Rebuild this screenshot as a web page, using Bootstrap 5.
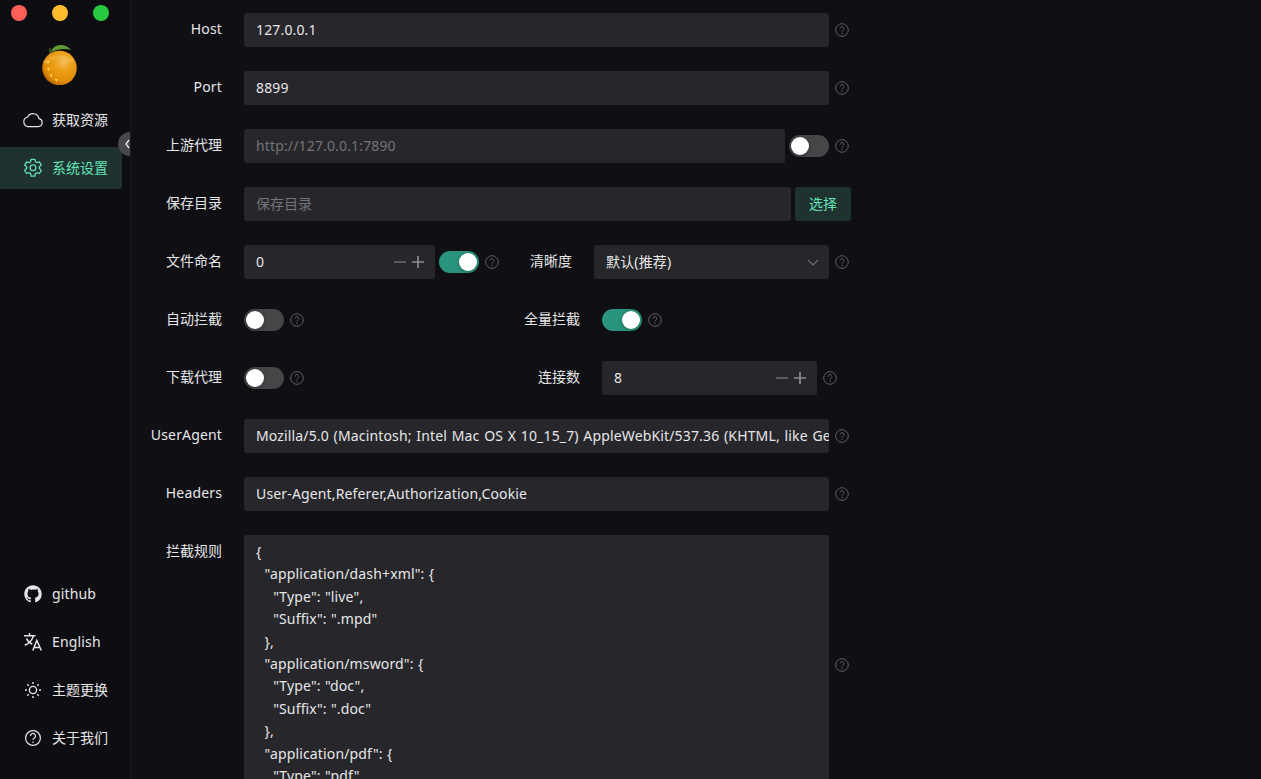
<!DOCTYPE html>
<html lang="zh"><head><meta charset="utf-8"><title>设置</title>
<link rel="stylesheet" href="https://cdn.jsdelivr.net/npm/bootstrap@5.3.0/dist/css/bootstrap.min.css">
<style>
html,body{height:100%;overflow:hidden;background:#101014}
body{font-family:"Noto Sans","Noto Sans CJK SC",sans-serif;font-size:14px;color:#e6e6e8}
.shell{height:779px}
.side{width:131px;flex:none;background:#0e0e12;border-right:1px solid #101a2c;position:relative}
.lights{padding:5px 0 0 11px;gap:25px}
.light{width:16px;height:16px;border-radius:50%}
.logo{margin:20px 0 0 40px;height:44px}
.mi{height:42px;width:122px;padding-left:23px;margin-bottom:6px;gap:9px;color:#e6e6e8;border-radius:0 3px 3px 0}
.mi svg{width:20px;height:20px;flex:none}
.mi span{margin-top:-2px}
.mi.on{background:#1f322f;color:#63e2b7}
.mitem-list{margin-top:14px}
.bottom{margin-top:auto;padding-bottom:20px}
.bottom .mi:last-child{margin-bottom:0}
.collapse-dot{position:absolute;left:118px;top:132px;width:12px;height:24px;overflow:hidden}
.collapse-dot i{display:block;width:24px;height:24px;border-radius:50%;background:#48484e}
.collapse-dot svg{position:absolute;left:7px;top:7px;width:5px;height:10px}
.pane{flex:1;padding-top:13px;overflow:hidden;min-width:0}
.frow{height:34px;margin-bottom:24px;width:730px}
.flabel{width:91px;margin-right:22px;flex:none;text-align:right;line-height:31px;height:34px}
.flabel2{flex:none;text-align:right;line-height:31px;height:34px}
.fin{height:34px;background:#27272b;border:0;border-radius:3px;padding:0 12px;color:#e6e6e8;font-size:14px;line-height:34px;font-family:inherit;outline:0;white-space:nowrap;overflow:hidden;min-width:0}
.fin::placeholder{color:#737378;opacity:1}
.fin,.area,.lat{letter-spacing:.15px;word-spacing:.9px}
.w585{width:585px}
.stepper{position:relative;flex:none}
.stepper svg{position:absolute;top:11px;width:12px;height:12px}
.swt{width:40px;height:22px;border-radius:11px;background:#464649;position:relative;flex:none}
.swt::after{content:"";position:absolute;left:2px;top:2px;width:18px;height:18px;border-radius:50%;background:#fff;box-shadow:0 1px 4px rgba(0,0,0,.3)}
.swt.act{background:#2a947d}
.swt.act::after{left:20px}
.hlp{width:14px;height:14px;flex:none;margin-left:6px;display:block}
.pick{width:56px;height:34px;flex:none;background:#1f322f;color:#63e2b7;border:0;border-radius:3px;margin-left:4px;font-size:14px;padding:0 0 2px}
.sel{position:relative}
.sel svg{position:absolute;right:10px;top:11px;width:12px;height:12px}
.area{width:585px;height:260px;background:#27272b;border-radius:3px;padding:6px 12px;line-height:22.4px;white-space:pre;overflow:hidden;color:#e6e6e8;word-spacing:.5px}
</style></head><body>
<svg width="0" height="0" class="position-absolute"><defs>
<symbol id="q" viewBox="0 0 14 14"><circle cx="7" cy="7" r="6.3" fill="none" stroke="#5f5f65" stroke-width="1"/><path d="M5.1 5.500a1.900 1.900 0 1 1 2.900 1.600c-.7.450-1 .8-1 1.500" fill="none" stroke="#5f5f65" stroke-width="1"/><circle cx="7" cy="10.300" r=".7" fill="#5f5f65"/></symbol>
<symbol id="minus" viewBox="0 0 12 12"><path d="M0 6h12" stroke="#6d6d72" stroke-width="1.700"/></symbol>
<symbol id="plus" viewBox="0 0 12 12"><path d="M0 6h12M6 0v12" stroke="#8b8b90" stroke-width="1.700"/></symbol>
</defs></svg>
<div class="shell d-flex">
<aside class="side d-flex flex-column">
 <div class="lights d-flex"><span class="light" style="background:#ff5f57"></span><span class="light" style="background:#febc2e"></span><span class="light" style="background:#28c840"></span></div>
 <div class="logo"><svg width="38" height="44" viewBox="0 0 38 44"><defs><radialGradient id="o" cx="62%" cy="32%" r="72%"><stop offset="0" stop-color="#f2c060"/><stop offset=".35" stop-color="#eea01a"/><stop offset=".8" stop-color="#e08a08"/><stop offset="1" stop-color="#b86005"/></radialGradient></defs><path d="M10 12V7" stroke="#5a7a30" stroke-width="1.200"/><path d="M11 11C13 3 25 1 31 9 25 7 18 8 11 11Z" fill="#5f9a35"/><circle cx="19.500" cy="27" r="17.300" fill="url(#o)"/><path d="M4 22C12 15 24 14 33 21" fill="none" stroke="#f7c860" stroke-opacity=".3" stroke-width="4"/><g fill="#ffe14a"><path d="M6.500 20h3l-1.500 3zM7 27h3l-1.500 3zM9.500 33.500h3l-1 3zM14.500 38h3l-1 3z"/></g></svg></div>
 <div class="mitem-list">
  <div class="mi d-flex align-items-center"><svg viewBox="0 0 20 20" fill="none" stroke="#e6e6e8" stroke-width="1.200"><path d="M4.800 16.600h10.400a4 4 0 0 0 .8-7.900 6 6 0 0 0-11.300-1.700A4.900 4.900 0 0 0 4.800 16.600Z"/></svg><span>获取资源</span></div>
  <div class="mi on d-flex align-items-center"><svg viewBox="0 0 20 20" fill="none" stroke="#63e2b7" stroke-width="1.300"><path d="M8.100 1.300h3.800l.5 2.500 1.500.9 2.500-.8 1.900 3.200-1.900 1.700v1.800l1.900 1.700-1.900 3.200-2.500-.8-1.500.9-.5 2.500H8.100l-.5-2.500-1.500-.9-2.500.8-1.900-3.200 1.900-1.700V8.800L1.700 7.100l1.900-3.200 2.500.8 1.500-.9Z" stroke-linejoin="round"/><circle cx="10" cy="9.700" r="2.900"/></svg><span>系统设置</span></div>
 </div>
 <div class="bottom">
  <div class="mi d-flex align-items-center"><svg viewBox="-1.200 -1.200 18.400 18.400" fill="#e6e6e8"><path d="M8 0C3.580 0 0 3.580 0 8c0 3.540 2.290 6.530 5.470 7.590.4.070.55-.17.55-.38 0-.19-.01-.82-.01-1.490-2.010.37-2.530-.49-2.690-.94-.09-.23-.48-.94-.82-1.130-.28-.15-.68-.52-.01-.53.630-.01 1.080.58 1.230.82.720 1.210 1.870.870 2.330.660.070-.520.280-.870.510-1.070-1.780-.2-3.640-.890-3.640-3.950 0-.870.310-1.590.820-2.150-.08-.2-.36-1.020.08-2.120 0 0 .670-.210 2.200.820a7.500 7.500 0 0 1 4 0c1.530-1.040 2.200-.820 2.200-.820.440 1.100.160 1.920.080 2.120.510.560.820 1.270.820 2.150 0 3.070-1.870 3.750-3.650 3.950.290.250.540.730.540 1.480 0 1.070-.01 1.930-.01 2.200 0 .210.150.460.550.380A8.010 8.010 0 0 0 16 8c0-4.420-3.580-8-8-8Z"/></svg><span class="lat">github</span></div>
  <div class="mi d-flex align-items-center"><svg viewBox="0 0 20 20" fill="none" stroke="#e6e6e8" stroke-width="1.500"><path d="M1 3.800h11.500M6.500 1v2.800M10.300 3.800c-1 4.200-4 7.400-8.500 9.400M3.500 6.500c1 2.500 3 4.500 5.800 5.700M9.800 18.500l4-10 4.500 10M11 15.500h6"/></svg><span class="lat">English</span></div>
  <div class="mi d-flex align-items-center"><svg viewBox="0 0 20 20" fill="none" stroke="#e6e6e8" stroke-width="1.400"><circle cx="10" cy="10" r="3.600"/><path d="M10 2v2M10 16v2M2 10h2M16 10h2M4.300 4.300l1.400 1.400M14.300 14.300l1.400 1.400M4.300 15.700l1.400-1.400M14.300 5.700l1.400-1.400"/></svg><span>主题更换</span></div>
  <div class="mi d-flex align-items-center"><svg viewBox="0 0 20 20" fill="none" stroke="#e6e6e8" stroke-width="1.200"><circle cx="10" cy="10" r="7.400"/><path d="M7.500 8a2.500 2.500 0 1 1 3.800 2.100c-.9.600-1.300 1-1.300 2"/><circle cx="10" cy="14.300" r=".8" fill="#e6e6e8" stroke="none"/></svg><span>关于我们</span></div>
 </div>
 <div class="collapse-dot"><i></i><svg viewBox="0 0 5 10" fill="none" stroke="#e6e6e8" stroke-width="1.300"><path d="M4 1 1 5l3 4"/></svg></div>
</aside>
<main class="pane">
 <div class="frow d-flex align-items-center"><div class="flabel lat">Host</div><div class="fin w585">127.0.0.1</div><svg class="hlp"><use href="#q"/></svg></div>
 <div class="frow d-flex align-items-center"><div class="flabel lat">Port</div><div class="fin w585">8899</div><svg class="hlp"><use href="#q"/></svg></div>
 <div class="frow d-flex align-items-center"><div class="flabel">上游代理</div><input class="fin" style="width:541px" placeholder="http://127.0.0.1:7890"><div class="swt ms-1"></div><svg class="hlp"><use href="#q"/></svg></div>
 <div class="frow d-flex align-items-center"><div class="flabel">保存目录</div><input class="fin" style="width:547px;letter-spacing:0" placeholder="保存目录"><button class="pick">选择</button></div>
 <div class="frow d-flex align-items-center"><div class="flabel">文件命名</div>
  <div class="fin stepper" style="width:191px">0<svg style="left:150px"><use href="#minus"/></svg><svg style="left:168px"><use href="#plus"/></svg></div>
  <div class="swt act ms-1"></div><svg class="hlp"><use href="#q"/></svg>
  <div class="flabel2" style="width:73px">清晰度</div>
  <div class="fin sel" style="width:235px;margin-left:22px">默认(推荐)<svg viewBox="0 0 12 12" fill="none" stroke="#6d6d72" stroke-width="1.100"><path d="M1 4l5 5 5-5"/></svg></div><svg class="hlp"><use href="#q"/></svg></div>
 <div class="frow d-flex align-items-center"><div class="flabel">自动拦截</div><div class="swt"></div><svg class="hlp"><use href="#q"/></svg><div class="flabel2" style="width:276px">全量拦截</div><div class="swt act" style="margin-left:22px"></div><svg class="hlp"><use href="#q"/></svg></div>
 <div class="frow d-flex align-items-center"><div class="flabel">下载代理</div><div class="swt"></div><svg class="hlp"><use href="#q"/></svg><div class="flabel2" style="width:276px">连接数</div><div class="fin stepper" style="width:215px;margin-left:22px">8<svg style="left:174px"><use href="#minus"/></svg><svg style="left:192px"><use href="#plus"/></svg></div><svg class="hlp"><use href="#q"/></svg></div>
 <div class="frow d-flex align-items-center"><div class="flabel lat">UserAgent</div><div class="fin w585">Mozilla/5.0 (Macintosh; Intel Mac OS X 10_15_7) AppleWebKit/537.36 (KHTML, like Gecko)</div><svg class="hlp"><use href="#q"/></svg></div>
 <div class="frow d-flex align-items-center"><div class="flabel lat">Headers</div><div class="fin w585">User-Agent,Referer,Authorization,Cookie</div><svg class="hlp"><use href="#q"/></svg></div>
 <div class="d-flex align-items-center" style="width:730px"><div class="flabel align-self-start">拦截规则</div><div class="area">{
  "application/dash+xml": {
    "Type": "live",
    "Suffix": ".mpd"
  },
  "application/msword": {
    "Type": "doc",
    "Suffix": ".doc"
  },
  "application/pdf": {
    "Type": "pdf"</div><svg class="hlp"><use href="#q"/></svg></div>
</main>
</div>
</body></html>
